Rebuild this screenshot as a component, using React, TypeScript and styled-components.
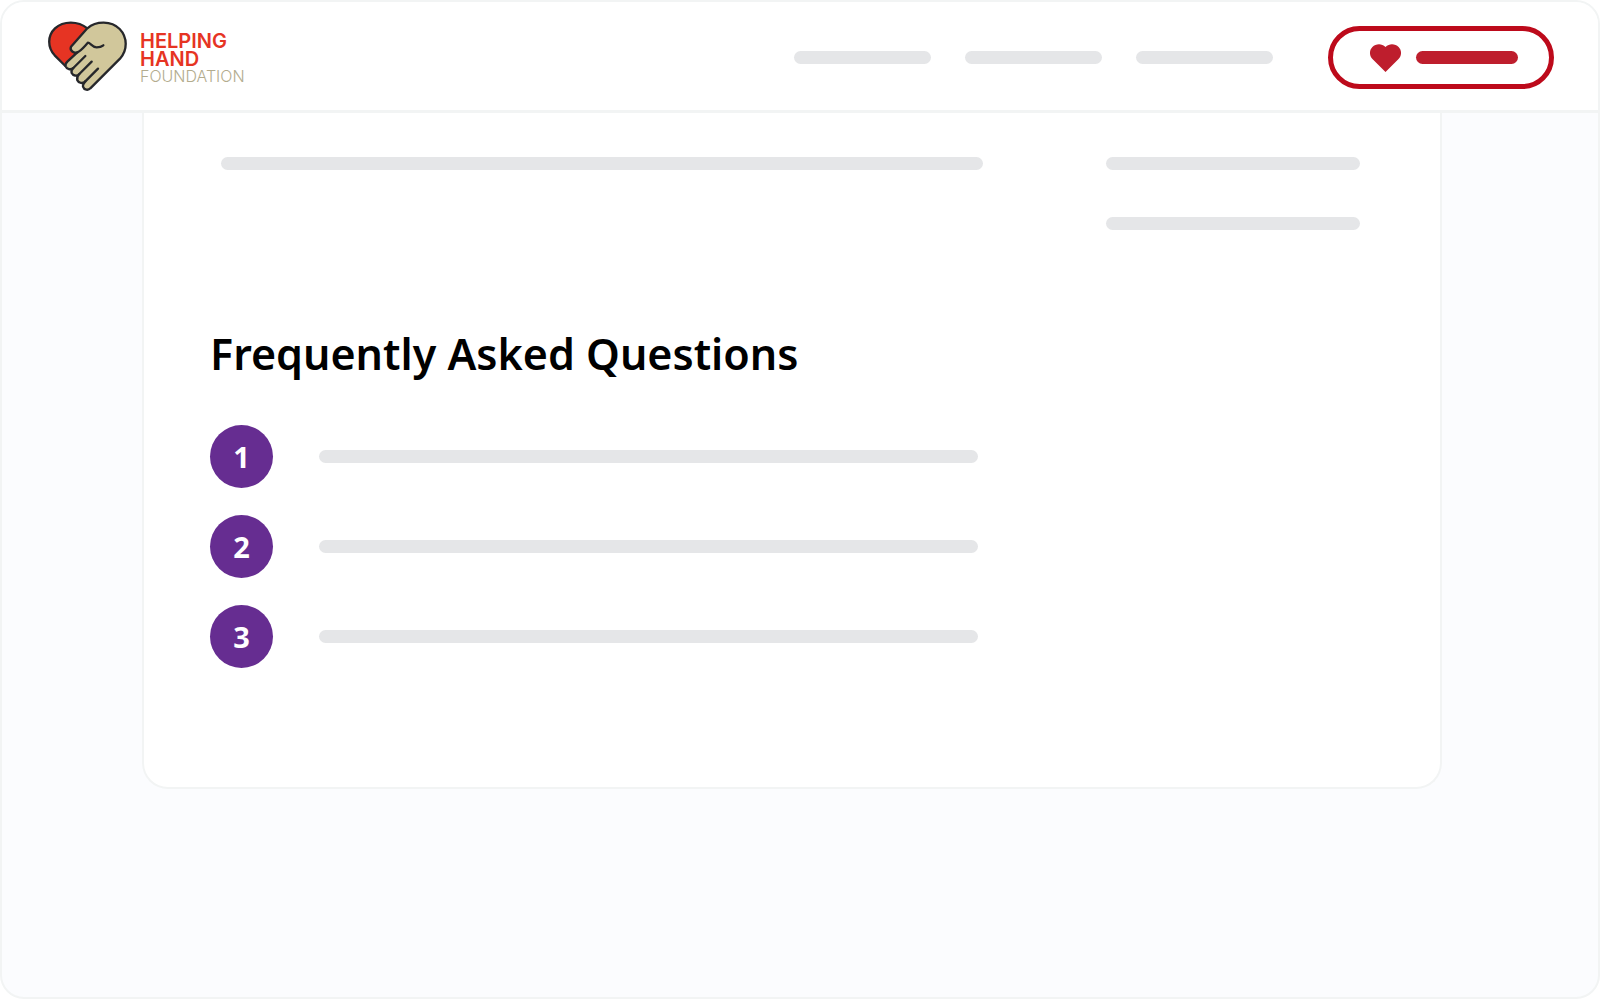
import React from "react";
import styled, { createGlobalStyle } from "styled-components";

const colors = {
  line: "#f2f4f4",
  bar: "#e5e6e8",
  canvas: "#fbfcfe",
  crimson: "#be1e2d",
  outline: "#bd0a1b",
  purple: "#662d91",
  logoRed: "#e63423",
  logoSand: "#d1c79b",
  logoInk: "#26272b",
};

const GlobalStyle = createGlobalStyle`
  *, *::before, *::after { box-sizing: border-box; }
  body {
    margin: 0;
    background: #fff;
    color: #000;
    font-family: "Noto Sans", "Open Sans", sans-serif;
  }
`;

const Page = styled.div`
  display: flex;
  flex-direction: column;
  min-height: 100vh;
  border: 2px solid ${colors.line};
  border-radius: 24px;
  background: ${colors.canvas};
  overflow: hidden;
`;

const Header = styled.header`
  display: flex;
  align-items: center;
  padding: 19px 44px 16px 46px;
  border-bottom: 3px solid ${colors.line};
  background: #fff;
`;

const Brand = styled.a`
  display: flex;
  align-items: center;
  gap: 12px;
  margin-right: auto;
  text-decoration: none;
`;

const BrandMark = styled.svg`
  display: block;
  width: 80px;
  height: 73px;
`;

const BrandName = styled.span`
  display: flex;
  flex-direction: column;
  font-family: Inter, sans-serif;
`;

const BrandStrong = styled.span`
  color: ${colors.logoRed};
  font-size: 20px;
  font-weight: 600;
  line-height: 18px;
`;

const BrandLight = styled.span`
  color: #b3ac8e;
  font-size: 16px;
  font-weight: 300;
  line-height: 16px;
`;

const Nav = styled.nav`
  display: flex;
  gap: 34px;
  margin-right: 55px;
`;

const Bar = styled.span<{ $width?: string; $color?: string }>`
  display: block;
  width: ${({ $width }) => $width ?? "100%"};
  height: 13px;
  border-radius: 7px;
  background: ${({ $color }) => $color ?? colors.bar};
`;

const DonateButton = styled.button`
  display: flex;
  align-items: center;
  gap: 15px;
  height: 63px;
  padding: 0 31px 0 37px;
  border: 5px solid ${colors.outline};
  border-radius: 32px;
  background: #fff;
  cursor: pointer;
`;

const Main = styled.main`
  flex: 1;
  padding: 0 156px 0 140px;
`;

const Card = styled.article`
  padding: 44px 80px 119px 66px;
  border: 2px solid ${colors.line};
  border-top: 0;
  border-radius: 0 0 26px 26px;
  background: #fff;
`;

const Intro = styled.div`
  display: grid;
  grid-template-columns: 3fr 1fr;
  column-gap: 123px;
  padding-left: 11px;
`;

const Aside = styled.div`
  display: flex;
  flex-direction: column;
  gap: 47px;
`;

const Heading = styled.h2`
  margin: 93px 0 40px;
  font-size: 43px;
  font-weight: 600;
  line-height: 62px;
`;

const Questions = styled.ol`
  display: flex;
  flex-direction: column;
  gap: 27px;
  margin: 0;
  padding: 0;
  list-style: none;
`;

const Question = styled.li`
  display: flex;
  align-items: center;
  gap: 46px;
`;

const Badge = styled.span`
  display: flex;
  flex: none;
  align-items: center;
  justify-content: center;
  width: 63px;
  height: 63px;
  border-radius: 50%;
  background: ${colors.purple};
  color: #fff;
  font-size: 29px;
  font-weight: 700;
  line-height: 40px;
`;

function HandHeart() {
  return (
    <BrandMark viewBox="24 19 240 219" aria-hidden="true">
      <g stroke={colors.logoInk} strokeWidth="7" strokeLinejoin="round" strokeLinecap="round">
        <path
          fill={colors.logoRed}
          d="M76 154 L44 122 C22 98 22 63 45 41 C70 18 114 18 142 41 L150 90 Z"
        />
        <path
          fill={colors.logoSand}
          d="M142 41 C169 18 214 18 239 43 C263 68 263 107 240 132 L151 221 C145 228 132 226 129 216 C128 210 132 205 136 200 C128 208 116 206 112 197 C110 190 113 183 118 178 C110 186 99 183 95 175 C93 169 96 164 100 160 C92 167 80 163 77 155 C75 149 78 145 82 141 L112 113 C102 117 88 108 93 96 Z"
        />
        <path
          fill="none"
          d="M112 113 C126 106 134 94 144 84 C151 84 156 98 170 98 C180 98 185 96 190 92 M100 160 L136 124 M118 178 L155 141 M136 200 L174 162"
        />
      </g>
    </BrandMark>
  );
}

function HeartIcon() {
  return (
    <svg width="31" height="28" viewBox="0 0 31 28" aria-hidden="true">
      <path
        fill={colors.crimson}
        d="M15.500 28 L2.700 15.300 C-.9 11.700-.9 6.300 2.400 3 C5.800-.4 11.600-.9 15.500 3 C19.400-.9 25.200-.4 28.600 3 C31.900 6.300 31.900 11.700 28.300 15.300 Z"
      />
    </svg>
  );
}

const links = ["About", "Programs", "Contact"];
const questions = [1, 2, 3];

export default function App() {
  return (
    <>
      <GlobalStyle />
      <Page>
        <Header>
          <Brand href="#">
            <HandHeart />
            <BrandName>
              <BrandStrong>HELPING</BrandStrong>
              <BrandStrong>HAND</BrandStrong>
              <BrandLight>FOUNDATION</BrandLight>
            </BrandName>
          </Brand>
          <Nav>
            {links.map((label) => (
              <a key={label} href="#" aria-label={label}>
                <Bar $width="137px" />
              </a>
            ))}
          </Nav>
          <DonateButton type="button" aria-label="Donate">
            <HeartIcon />
            <Bar $width="102px" $color={colors.crimson} />
          </DonateButton>
        </Header>
        <Main>
          <Card>
            <Intro>
              <Bar />
              <Aside>
                <Bar />
                <Bar />
              </Aside>
            </Intro>
            <Heading>Frequently Asked Questions</Heading>
            <Questions>
              {questions.map((n) => (
                <Question key={n}>
                  <Badge>{n}</Badge>
                  <Bar $width="659px" />
                </Question>
              ))}
            </Questions>
          </Card>
        </Main>
      </Page>
    </>
  );
}
